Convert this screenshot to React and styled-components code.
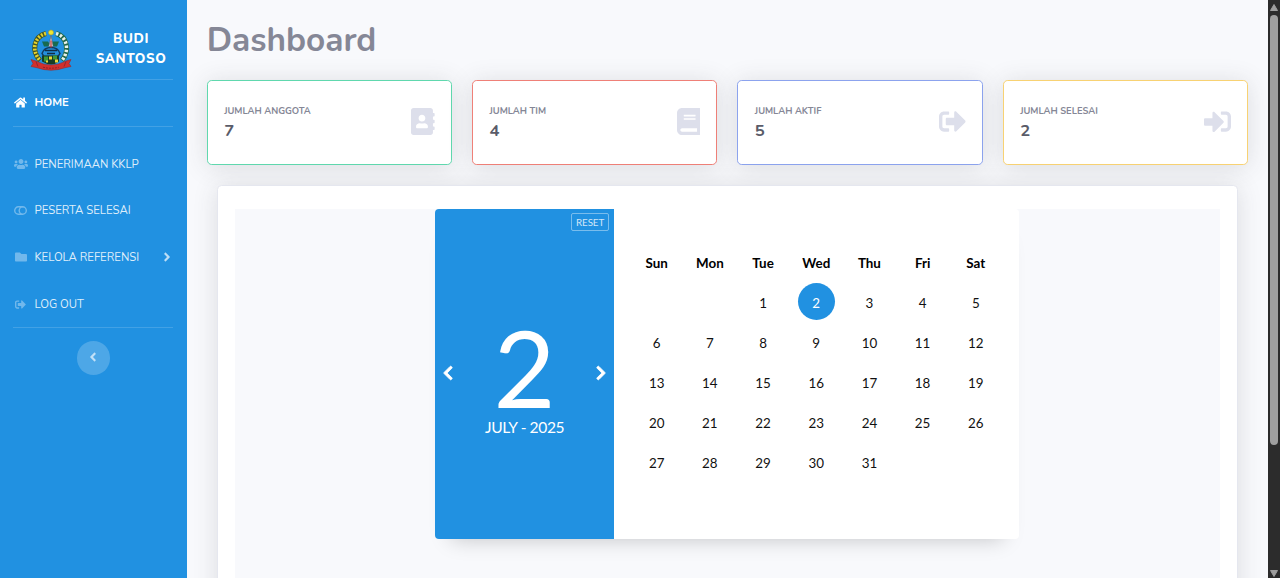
import React from "react";
import styled, { createGlobalStyle } from "styled-components";
import {
  FaHome, FaUsers, FaFolder, FaSignOutAlt, FaSignInAlt,
  FaAddressBook, FaBook, FaChevronLeft, FaChevronRight, FaAngleRight, FaAngleLeft,
} from "react-icons/fa";

const Global = createGlobalStyle`
  * { box-sizing: border-box; }
  body { margin: 0; overflow: hidden; background: #f8f9fc; }
  button { font: inherit; padding: 0; border: 0; background: none; color: inherit; }
`;

const Page = styled.div`
  display: flex;
  height: 578px;
  overflow: hidden;
  font-family: Nunito, Lato, sans-serif;
  color: #858796;
`;

const Sidebar = styled.nav`
  flex: 0 0 186.67px;
  display: flex;
  flex-direction: column;
  background: #2191e1;
  color: #fff;
`;

const Brand = styled.div`
  display: flex;
  height: 79px;
  padding: 29px 17.5px 0 30px;
`;

const BrandName = styled.div`
  margin-left: auto;
  width: 76px;
  text-align: center;
  font-size: 13.33px;
  font-weight: 800;
  line-height: 20px;
  letter-spacing: 0.67px;
`;

const Divider = styled.div`
  height: 1px;
  margin: 0 13.3px;
  background: rgba(255, 255, 255, 0.15);
`;

const NavItem = styled.a`
  display: flex;
  align-items: center;
  height: ${(p) => (p.$active ? 46 : 46.67)}px;
  padding: 0 13px ${(p) => (p.$active ? 1 : 0)}px;
  font-size: 11.33px;
  font-weight: ${(p) => (p.$active ? 700 : 400)};
  color: ${(p) => (p.$active ? "#fff" : "rgba(255,255,255,0.86)")};
  svg { color: ${(p) => (p.$active ? "#fff" : "rgba(255,255,255,0.36)")}; }
`;

const NavIcon = styled.span`
  display: flex;
  justify-content: center;
  width: 15px;
  margin-right: 6.5px;
  font-size: ${(p) => p.$size || 12}px;
`;

const Caret = styled.span`
  display: flex;
  margin-left: auto;
  font-size: 14px;
  && svg { color: rgba(255, 255, 255, 0.7); }
`;

const NavGroup = styled.div`
  padding: 13.8px 0 0;
`;

const Collapse = styled.button`
  && {
    display: flex;
    align-items: center;
    justify-content: center;
    align-self: center;
    width: 33.4px;
    height: 33.4px;
    margin-top: 12.7px;
    padding: 0 1px 2px 0;
    border-radius: 50%;
    background: rgba(255, 255, 255, 0.2);
    font-size: 14px;
    color: rgba(255, 255, 255, 0.65);
  }
`;

const Main = styled.main`
  flex: 1;
  display: flex;
  flex-direction: column;
  min-width: 0;
  padding: 20px 20px 0;
  background: #f8f9fc;
`;

const Title = styled.h1`
  margin: 0 0 20px;
  font-size: 33.33px;
  line-height: 40px;
  font-weight: 700;
`;

const Stats = styled.section`
  display: grid;
  grid-template-columns: repeat(4, 1fr);
  gap: 20px;
  margin-bottom: 19.5px;
`;

const shadow = "0 2px 24px rgba(58, 59, 69, 0.15)";

const StatCard = styled.article`
  display: flex;
  align-items: center;
  justify-content: space-between;
  height: 85.4px;
  padding: 0 16px 2px 16.5px;
  border: 1px solid ${(p) => p.$tone};
  border-radius: 4.7px;
  background: #fff;
  box-shadow: ${shadow};
`;

const StatText = styled.div`
  padding-top: 4px;
`;

const StatLabel = styled.div`
  font-size: 9.33px;
  line-height: 14px;
  font-weight: 700;
`;

const StatValue = styled.div`
  margin-top: 1px;
  font-size: 16.67px;
  line-height: 24px;
  font-weight: 700;
  color: #5a5c69;
`;

const StatIcon = styled.span`
  display: flex;
  font-size: 27px;
  color: #dddfeb;
  svg { width: ${(p) => (p.$narrow ? 0.875 : 1)}em; height: 1em; }
`;

const Panel = styled.section`
  flex: 1 0 420px;
  display: flex;
  margin: 0 10.5px 0 10px;
  padding: 23px 17px 0;
  border: 1px solid #e5e7ef;
  border-radius: 4.5px;
  background: #fff;
  box-shadow: ${shadow};
`;

const PanelBody = styled.div`
  flex: 1;
  display: flex;
  justify-content: center;
  align-items: flex-start;
  background: #f8f9fc;
`;

const Calendar = styled.div`
  display: flex;
  width: 584px;
  height: 330px;
  font-family: Lato, sans-serif;
  border-radius: 4px;
  background: #fff;
  box-shadow: 0 16px 20px -16px rgba(0, 0, 0, 0.22);
`;

const DayPane = styled.div`
  flex: 0 0 178.5px;
  display: flex;
  flex-direction: column;
  padding: 4.5px 4.5px 0 5px;
  border-radius: 4px 0 0 4px;
  background: #2191e1;
  color: #fff;
`;

const Reset = styled.button`
  && {
    align-self: flex-end;
    width: 38px;
    height: 18px;
    border: 1px solid rgba(255, 255, 255, 0.4);
    border-radius: 2px;
    font-size: 9.8px;
    line-height: 15px;
    letter-spacing: -0.1px;
    color: rgba(255, 255, 255, 0.8);
  }
`;

const DayRow = styled.div`
  display: flex;
  align-items: center;
  justify-content: space-between;
  margin-top: 86.5px;
  height: 98px;
  font-size: 16px;
`;

const Day = styled.div`
  font-size: 107px;
  line-height: 98px;
`;

const Month = styled.div`
  text-align: center;
  font-size: 15.6px;
  line-height: 22px;
  letter-spacing: -0.4px;
`;

const Arrow = styled.button`
  && {
    display: flex;
    padding-top: 13px;
  }
  svg { stroke: currentColor; stroke-width: 28px; overflow: visible; }
`;

const Dates = styled.div`
  flex: 1;
  display: grid;
  grid-template-columns: repeat(7, 53.2px);
  grid-auto-rows: 40px;
  padding: 34px 0 0 16.5px;
  font-size: 13.4px;
  color: #111;
`;

const Cell = styled.div`
  display: flex;
  align-items: center;
  justify-content: center;
  font-weight: ${(p) => (p.$head ? 700 : 400)};
  color: ${(p) => (p.$head ? "#000" : "inherit")};
`;

const Today = styled.span`
  display: flex;
  align-items: center;
  justify-content: center;
  width: 37px;
  height: 37px;
  margin-bottom: 2px;
  padding-top: 2px;
  border-radius: 50%;
  background: #2191e1;
  color: #fff;
`;

const Scrollbar = styled.div`
  flex: 0 0 12px;
  display: flex;
  flex-direction: column;
  align-items: center;
  padding: 4px 0 1px;
  background: #2c2c2c;
  svg { flex: none; }
`;

const Thumb = styled.div`
  width: 8px;
  height: 430px;
  margin: 4px 0 auto;
  border-radius: 4px;
  background: #9f9f9f;
`;

const Crest = () => (
  <svg width="42" height="43" viewBox="0 .5 42 43">
    <g fill="none">
      <path d="M16 5C4 8 1 22 10 32" stroke="#3f5527" strokeWidth="5" />
      <path d="M16 5C4 8 1 22 10 32" stroke="#e5d32d" strokeWidth="3.6" strokeDasharray="1.9 1.5" />
      <path d="M26 5C37 8 40 22 32 32" stroke="#24694b" strokeWidth="5" />
      <path d="M26 5C37 8 40 22 32 32" stroke="#e8f2ec" strokeWidth="3.4" strokeDasharray="2.4 1.8" />
    </g>
    <path d="M12 13h6l2 3 2-3h7l-2 5h-4l-2-2-3 2h-4z" fill="#176b50" />
    <path d="M12 25q2-6 9-6t9 6l-2 3H14z" fill="#2590dc" stroke="#123a5e" strokeWidth="1.4" />
    <path d="M15 22h12M17 25h8" stroke="#102d45" strokeWidth="1.3" />
    <path d="M21 7l-2.2 11h4.4z" fill="#e8eef2" stroke="#5c5560" strokeWidth=".6" />
    <path d="M21 12v7" stroke="#c53a34" strokeWidth="1.3" />
    <path d="M12 27h17v6q-4 3-8 3t-9-3z" fill="#163d25" />
    <path d="M14 28h4v5h-4zM23 27h4v4h-4z" fill="#3f9a38" />
    <path d="M19 28h3v3h-3zM25 31h3v3h-3zM16 32h2v2h-2z" fill="#ead83a" />
    <circle cx="21" cy="4" r="2.5" fill="#f0e532" stroke="#a7a02b" strokeWidth=".6" />
    <path d="M1 31l5 1.5q15 8 30 0l5-1.5-2 4 2 3-6 1.2q-14 5-28 0l-6-1.2 2-3z" fill="#d2302c" stroke="#8f2b32" strokeWidth=".6" />
    <path d="M6 33l2 5M36 33l-2 5" stroke="#832530" strokeWidth=".8" />
    <path d="M13 38.7q8 2 16 0" fill="none" stroke="#8f2228" strokeWidth="1" strokeDasharray="2 1" />
  </svg>
);

const ToggleIcon = () => (
  <svg width="13" height="9" viewBox="0 0 13 9" fill="none" stroke="currentColor" strokeWidth="1.4">
    <path d="M4.4 .8h4.2a3.7 3.7 0 0 1 0 7.4H4.4a3.7 3.7 0 0 1 0-7.4z M8.9 .8a3.7 3.7 0 0 0 0 7.4" />
  </svg>
);

const stats = [
  { label: "JUMLAH ANGGOTA", value: 7, tone: "#60d8ae", Icon: FaAddressBook, narrow: true },
  { label: "JUMLAH TIM", value: 4, tone: "#ef8078", Icon: FaBook, narrow: true },
  { label: "JUMLAH AKTIF", value: 5, tone: "#8ca3ee", Icon: FaSignOutAlt },
  { label: "JUMLAH SELESAI", value: 2, tone: "#f8d273", Icon: FaSignInAlt },
];

const weekdays = ["Sun", "Mon", "Tue", "Wed", "Thu", "Fri", "Sat"];
const cells = [null, null, ...Array.from({ length: 31 }, (_, i) => i + 1)];

export default function App() {
  return (
    <Page>
      <Global />
      <Sidebar>
        <Brand>
          <Crest />
          <BrandName>BUDI SANTOSO</BrandName>
        </Brand>
        <Divider />
        <NavItem $active><NavIcon $size={13}><FaHome /></NavIcon>HOME</NavItem>
        <Divider />
        <NavGroup>
          <NavItem><NavIcon $size={14}><FaUsers /></NavIcon>PENERIMAAN KKLP</NavItem>
          <NavItem><NavIcon><ToggleIcon /></NavIcon>PESERTA SELESAI</NavItem>
          <NavItem>
            <NavIcon><FaFolder /></NavIcon>KELOLA REFERENSI
            <Caret><FaAngleRight /></Caret>
          </NavItem>
          <NavItem><NavIcon $size={11}><FaSignOutAlt /></NavIcon>LOG OUT</NavItem>
        </NavGroup>
        <Divider />
        <Collapse><FaAngleLeft /></Collapse>
      </Sidebar>
      <Main>
        <Title>Dashboard</Title>
        <Stats>
          {stats.map(({ label, value, tone, Icon, narrow }) => (
            <StatCard key={label} $tone={tone}>
              <StatText>
                <StatLabel>{label}</StatLabel>
                <StatValue>{value}</StatValue>
              </StatText>
              <StatIcon $narrow={narrow}><Icon /></StatIcon>
            </StatCard>
          ))}
        </Stats>
        <Panel>
          <PanelBody>
            <Calendar>
              <DayPane>
                <Reset>RESET</Reset>
                <DayRow>
                  <Arrow><FaChevronLeft /></Arrow>
                  <Day>2</Day>
                  <Arrow><FaChevronRight /></Arrow>
                </DayRow>
                <Month>JULY - 2025</Month>
              </DayPane>
              <Dates>
                {weekdays.map((d) => <Cell key={d} $head>{d}</Cell>)}
                {cells.map((d, i) => (
                  <Cell key={i}>{d === 2 ? <Today>{d}</Today> : d}</Cell>
                ))}
              </Dates>
            </Calendar>
          </PanelBody>
        </Panel>
      </Main>
      <Scrollbar>
        <svg width="8" height="7" viewBox="0 0 8 7"><path d="M4 .5L7.5 6.5H.5z" fill="#9f9f9f" stroke="#9f9f9f" strokeLinejoin="round" /></svg>
        <Thumb />
        <svg width="8" height="7" viewBox="0 0 8 7"><path d="M4 6.5L.5 .5h7z" fill="#9f9f9f" stroke="#9f9f9f" strokeLinejoin="round" /></svg>
      </Scrollbar>
    </Page>
  );
}
